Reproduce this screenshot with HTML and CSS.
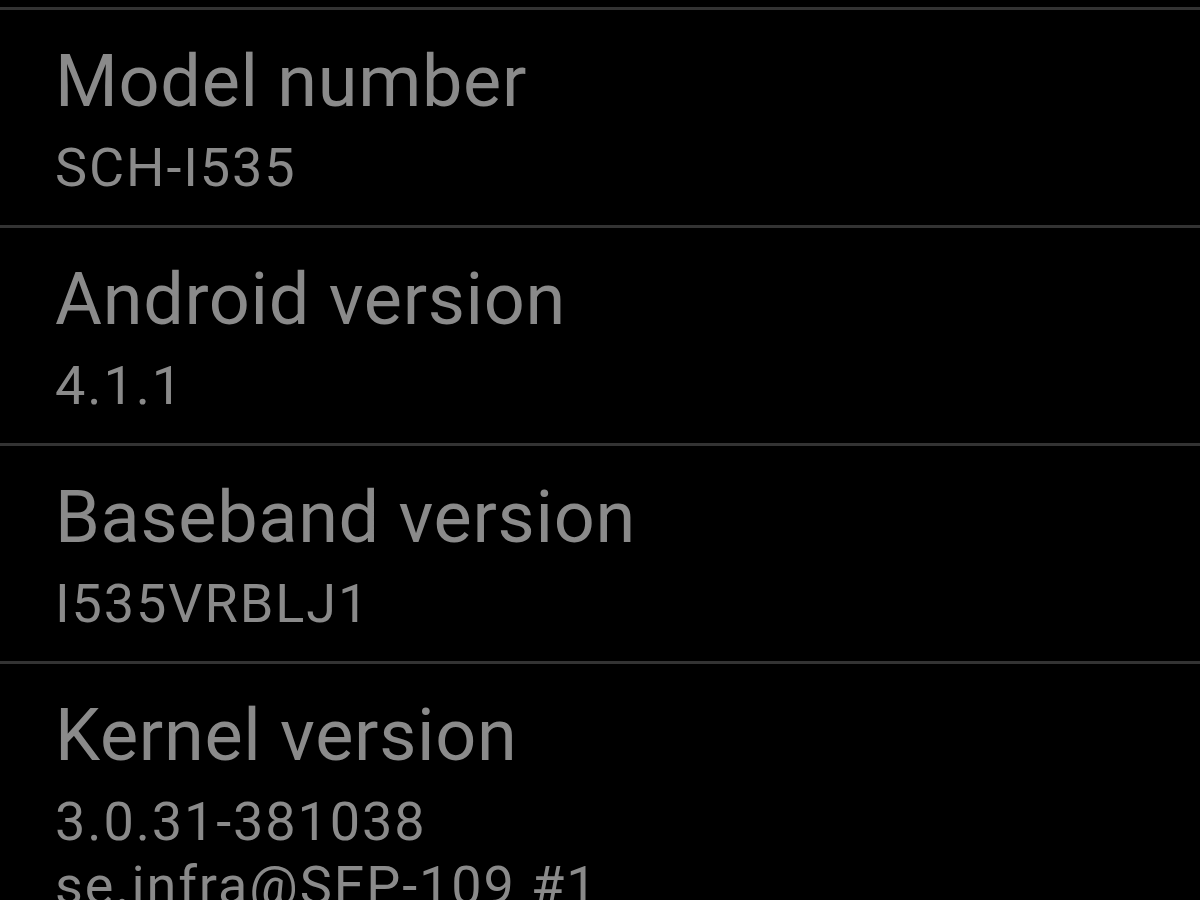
FILE: index.html
```html
<!DOCTYPE html>
<html>
<head>
<meta charset="utf-8">
<link rel="stylesheet" href="styles.css">
</head>
<body>
<div class="list">
  <div class="row">
    <div class="title">Model number</div>
    <div class="summary">SCH-I535</div>
  </div>
  <div class="row">
    <div class="title">Android version</div>
    <div class="summary">4.1.1</div>
  </div>
  <div class="row">
    <div class="title">Baseband version</div>
    <div class="summary">I535VRBLJ1</div>
  </div>
  <div class="row">
    <div class="title">Kernel version</div>
    <div class="summary">3.0.31-381038<br>se.infra@SEP-109 #1</div>
  </div>
</div>
</body>
</html>
```
FILE: styles.css
```css
html, body {
  margin: 0;
  padding: 0;
  background: #000;
  height: 900px;
  overflow: hidden;
}
.list {
  padding-top: 7px;
  font-family: Roboto, "Liberation Sans", sans-serif;
  color: #8a8a8a;
}
.row {
  border-top: 3px solid #333333;
  min-height: 183px;
  padding: 32px 0 0 55px;
  display: flex;
  flex-direction: column;
}
.title {
  font-size: 72px;
  line-height: 80px;
  letter-spacing: 0.7px;
  white-space: nowrap;
}
.summary {
  font-size: 54px;
  line-height: 64px;
  margin-top: 14px;
  letter-spacing: 1.9px;
  white-space: nowrap;
}
```
